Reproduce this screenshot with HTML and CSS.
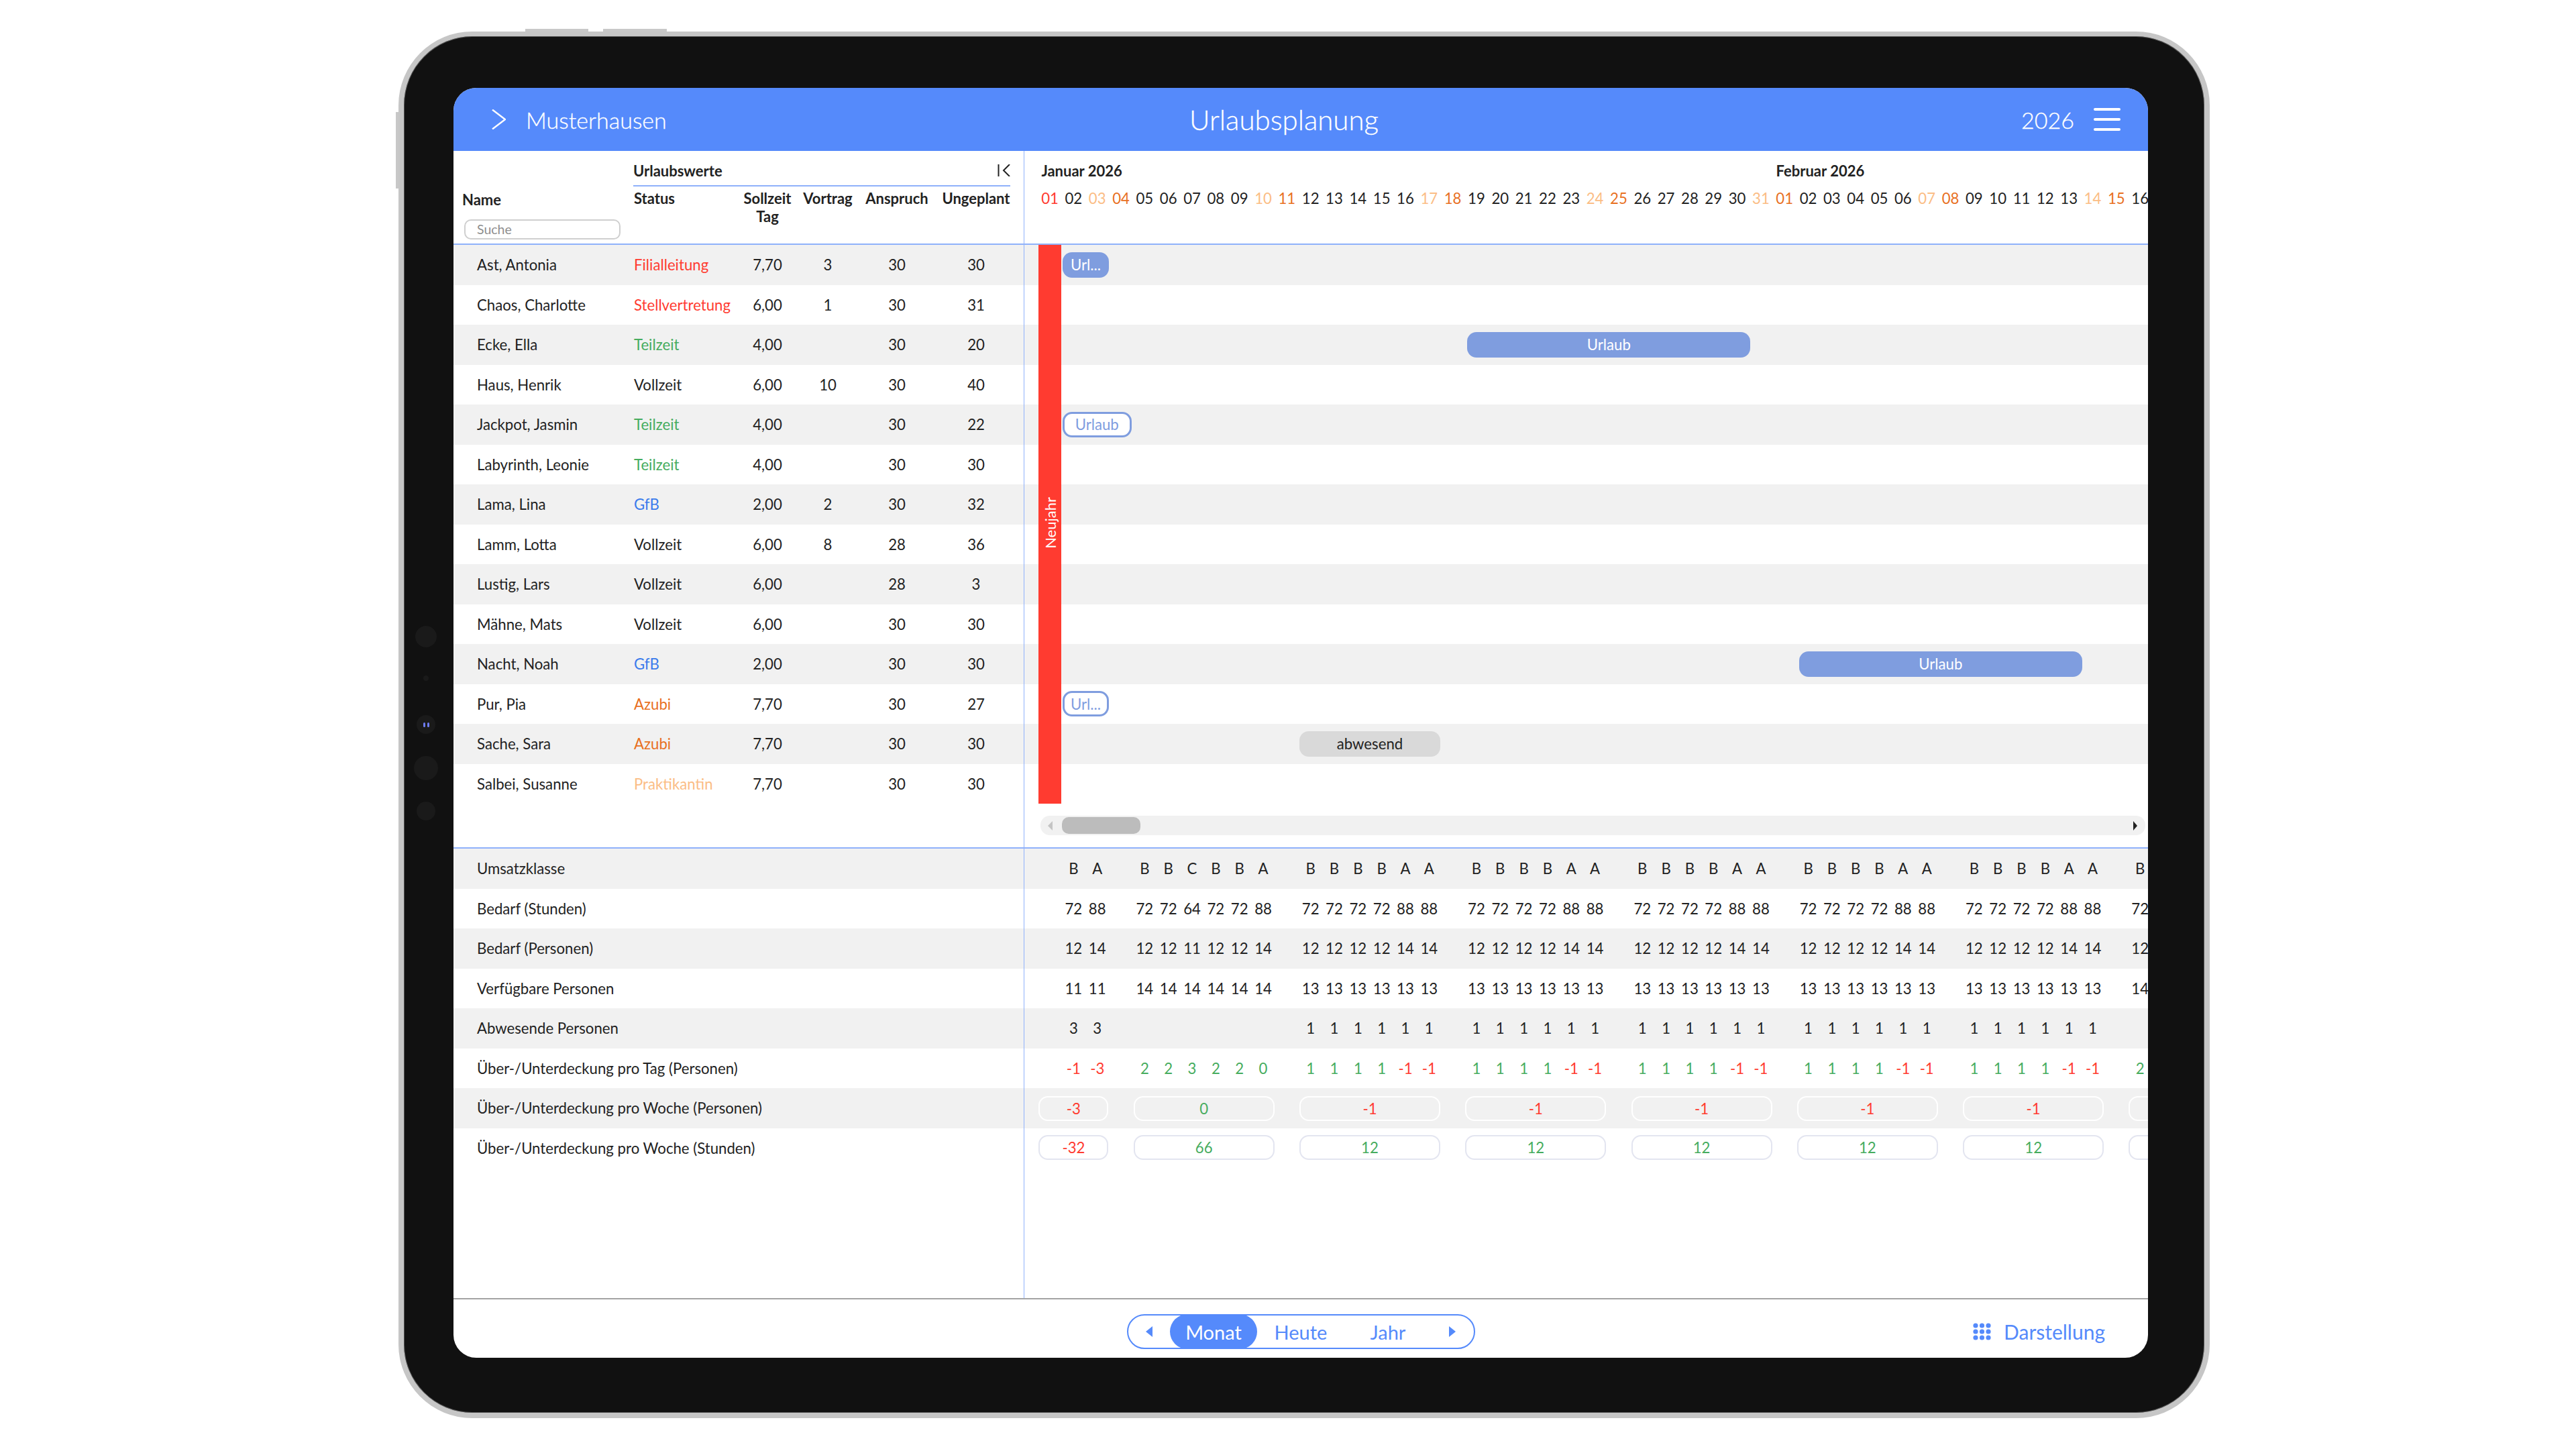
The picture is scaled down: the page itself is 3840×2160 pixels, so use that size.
FILE: index.html
```html
<!DOCTYPE html>
<html lang="de">
<head>
<meta charset="utf-8">
<title>Urlaubsplanung</title>
<link rel="stylesheet" href="styles.css">
</head>
<body>
<div class="device">
  <span class="hw top-a"></span><span class="hw top-b"></span><span class="hw side"></span>
  <span class="lens l1"></span><span class="lens l2"></span><span class="lens l3"><b></b><b></b></span><span class="lens l4"></span><span class="lens l5"></span>
  <div class="screen">
    <header class="app-header">
      <div class="hd-left">
        <svg class="chev" width="21" height="30" viewBox="0 0 21 30"><polyline points="1,0.5 20,15 1,29.5" fill="none" stroke="#fff" stroke-width="2.4"/></svg>
        <span>Musterhausen</span>
      </div>
      <div class="title">Urlaubsplanung</div>
      <div class="hd-right">
        <span>2026</span>
        <svg width="40" height="34" viewBox="0 0 40 34"><g fill="#fff"><rect width="40" height="4" rx="2"/><rect y="15" width="40" height="4" rx="2"/><rect y="30" width="40" height="4" rx="2"/></g></svg>
      </div>
    </header>
    <main class="main">
      <section class="upper">
        <div class="pane-l">
          <div class="head">
            <div class="head-name">
              <div class="nm">Name</div>
              <div class="search">Suche</div>
            </div>
            <div class="head-values">
              <div class="group"><span>Urlaubswerte</span>
                <svg width="19" height="18" viewBox="0 0 19 18"><path d="M1.5 0V18M18 0L9 9L18 18" fill="none" stroke="#222" stroke-width="2"/></svg>
              </div>
              <div class="cols">
                <span class="st">Status</span><span>Sollzeit<br>Tag</span><span>Vortrag</span><span>Anspruch</span><span class="ung">Ungeplant</span>
              </div>
            </div>
          </div>
          <div class="rows">
            <div class="row"><span class="n">Ast, Antonia</span><span class="st red">Filialleitung</span><span>7,70</span><span>3</span><span>30</span><span>30</span></div>
            <div class="row"><span class="n">Chaos, Charlotte</span><span class="st red">Stellvertretung</span><span>6,00</span><span>1</span><span>30</span><span>31</span></div>
            <div class="row"><span class="n">Ecke, Ella</span><span class="st green">Teilzeit</span><span>4,00</span><span></span><span>30</span><span>20</span></div>
            <div class="row"><span class="n">Haus, Henrik</span><span class="st">Vollzeit</span><span>6,00</span><span>10</span><span>30</span><span>40</span></div>
            <div class="row"><span class="n">Jackpot, Jasmin</span><span class="st green">Teilzeit</span><span>4,00</span><span></span><span>30</span><span>22</span></div>
            <div class="row"><span class="n">Labyrinth, Leonie</span><span class="st green">Teilzeit</span><span>4,00</span><span></span><span>30</span><span>30</span></div>
            <div class="row"><span class="n">Lama, Lina</span><span class="st blue">GfB</span><span>2,00</span><span>2</span><span>30</span><span>32</span></div>
            <div class="row"><span class="n">Lamm, Lotta</span><span class="st">Vollzeit</span><span>6,00</span><span>8</span><span>28</span><span>36</span></div>
            <div class="row"><span class="n">Lustig, Lars</span><span class="st">Vollzeit</span><span>6,00</span><span></span><span>28</span><span>3</span></div>
            <div class="row"><span class="n">Mähne, Mats</span><span class="st">Vollzeit</span><span>6,00</span><span></span><span>30</span><span>30</span></div>
            <div class="row"><span class="n">Nacht, Noah</span><span class="st blue">GfB</span><span>2,00</span><span></span><span>30</span><span>30</span></div>
            <div class="row"><span class="n">Pur, Pia</span><span class="st orange">Azubi</span><span>7,70</span><span></span><span>30</span><span>27</span></div>
            <div class="row"><span class="n">Sache, Sara</span><span class="st orange">Azubi</span><span>7,70</span><span></span><span>30</span><span>30</span></div>
            <div class="row"><span class="n">Salbei, Susanne</span><span class="st light">Praktikantin</span><span>7,70</span><span></span><span>30</span><span>30</span></div>
          </div>
        </div>
        <div class="pane-r">
          <div class="head chart-head">
            <div class="months"><span class="m-jan">Januar 2026</span><span class="m-feb">Februar 2026</span></div>
            <div class="days">
              <span class="red">01</span><span>02</span><span class="light">03</span><span class="orange">04</span><span>05</span><span>06</span><span>07</span><span>08</span><span>09</span><span class="light">10</span><span class="orange">11</span><span>12</span><span>13</span><span>14</span><span>15</span><span>16</span><span class="light">17</span><span class="orange">18</span><span>19</span><span>20</span><span>21</span><span>22</span><span>23</span><span class="light">24</span><span class="orange">25</span><span>26</span><span>27</span><span>28</span><span>29</span><span>30</span><span class="light">31</span><span class="orange">01</span><span>02</span><span>03</span><span>04</span><span>05</span><span>06</span><span class="light">07</span><span class="orange">08</span><span>09</span><span>10</span><span>11</span><span>12</span><span>13</span><span class="light">14</span><span class="orange">15</span><span>16</span>
            </div>
          </div>
          <div class="chart-body">
            <div class="holiday"><span>Neujahr</span></div>
            <div class="crow"><span class="bar solid b-short">Url...</span></div>
            <div class="crow"></div>
            <div class="crow"><span class="bar solid b-ecke">Urlaub</span></div>
            <div class="crow"></div>
            <div class="crow"><span class="bar outline b-jack">Urlaub</span></div>
            <div class="crow"></div>
            <div class="crow"></div>
            <div class="crow"></div>
            <div class="crow"></div>
            <div class="crow"></div>
            <div class="crow"><span class="bar solid b-nacht">Urlaub</span></div>
            <div class="crow"><span class="bar outline b-short">Url...</span></div>
            <div class="crow"><span class="bar gray b-abw">abwesend</span></div>
            <div class="crow"></div>
          </div>
          <div class="scroll">
            <span class="arr"><svg width="7" height="14" viewBox="0 0 7 14"><path d="M7 0V14L0 7Z" fill="#c4c4c4"/></svg></span>
            <span class="thumb"></span>
            <span class="arr end"><svg width="6" height="14" viewBox="0 0 6 14"><path d="M0 0V14L6 7Z" fill="#222"/></svg></span>
          </div>
        </div>
      </section>
      <section class="lower">
        <div class="pane-l">
          <div class="lrow">Umsatzklasse</div>
          <div class="lrow">Bedarf (Stunden)</div>
          <div class="lrow">Bedarf (Personen)</div>
          <div class="lrow">Verfügbare Personen</div>
          <div class="lrow">Abwesende Personen</div>
          <div class="lrow">Über-/Unterdeckung pro Tag (Personen)</div>
          <div class="lrow">Über-/Unterdeckung pro Woche (Personen)</div>
          <div class="lrow">Über-/Unterdeckung pro Woche (Stunden)</div>
        </div>
        <div class="pane-r">
          <div class="vrow"><i></i><span>B</span><span>A</span><i></i><span>B</span><span>B</span><span>C</span><span>B</span><span>B</span><span>A</span><i></i><span>B</span><span>B</span><span>B</span><span>B</span><span>A</span><span>A</span><i></i><span>B</span><span>B</span><span>B</span><span>B</span><span>A</span><span>A</span><i></i><span>B</span><span>B</span><span>B</span><span>B</span><span>A</span><span>A</span><i></i><span>B</span><span>B</span><span>B</span><span>B</span><span>A</span><span>A</span><i></i><span>B</span><span>B</span><span>B</span><span>B</span><span>A</span><span>A</span><i></i><span>B</span></div>
          <div class="vrow"><i></i><span>72</span><span>88</span><i></i><span>72</span><span>72</span><span>64</span><span>72</span><span>72</span><span>88</span><i></i><span>72</span><span>72</span><span>72</span><span>72</span><span>88</span><span>88</span><i></i><span>72</span><span>72</span><span>72</span><span>72</span><span>88</span><span>88</span><i></i><span>72</span><span>72</span><span>72</span><span>72</span><span>88</span><span>88</span><i></i><span>72</span><span>72</span><span>72</span><span>72</span><span>88</span><span>88</span><i></i><span>72</span><span>72</span><span>72</span><span>72</span><span>88</span><span>88</span><i></i><span>72</span></div>
          <div class="vrow"><i></i><span>12</span><span>14</span><i></i><span>12</span><span>12</span><span>11</span><span>12</span><span>12</span><span>14</span><i></i><span>12</span><span>12</span><span>12</span><span>12</span><span>14</span><span>14</span><i></i><span>12</span><span>12</span><span>12</span><span>12</span><span>14</span><span>14</span><i></i><span>12</span><span>12</span><span>12</span><span>12</span><span>14</span><span>14</span><i></i><span>12</span><span>12</span><span>12</span><span>12</span><span>14</span><span>14</span><i></i><span>12</span><span>12</span><span>12</span><span>12</span><span>14</span><span>14</span><i></i><span>12</span></div>
          <div class="vrow"><i></i><span>11</span><span>11</span><i></i><span>14</span><span>14</span><span>14</span><span>14</span><span>14</span><span>14</span><i></i><span>13</span><span>13</span><span>13</span><span>13</span><span>13</span><span>13</span><i></i><span>13</span><span>13</span><span>13</span><span>13</span><span>13</span><span>13</span><i></i><span>13</span><span>13</span><span>13</span><span>13</span><span>13</span><span>13</span><i></i><span>13</span><span>13</span><span>13</span><span>13</span><span>13</span><span>13</span><i></i><span>13</span><span>13</span><span>13</span><span>13</span><span>13</span><span>13</span><i></i><span>14</span></div>
          <div class="vrow"><i></i><span>3</span><span>3</span><i></i><i></i><i></i><i></i><i></i><i></i><i></i><i></i><span>1</span><span>1</span><span>1</span><span>1</span><span>1</span><span>1</span><i></i><span>1</span><span>1</span><span>1</span><span>1</span><span>1</span><span>1</span><i></i><span>1</span><span>1</span><span>1</span><span>1</span><span>1</span><span>1</span><i></i><span>1</span><span>1</span><span>1</span><span>1</span><span>1</span><span>1</span><i></i><span>1</span><span>1</span><span>1</span><span>1</span><span>1</span><span>1</span></div>
          <div class="vrow"><i></i><span class="red">-1</span><span class="red">-3</span><i></i><span class="green">2</span><span class="green">2</span><span class="green">3</span><span class="green">2</span><span class="green">2</span><span class="green">0</span><i></i><span class="green">1</span><span class="green">1</span><span class="green">1</span><span class="green">1</span><span class="red">-1</span><span class="red">-1</span><i></i><span class="green">1</span><span class="green">1</span><span class="green">1</span><span class="green">1</span><span class="red">-1</span><span class="red">-1</span><i></i><span class="green">1</span><span class="green">1</span><span class="green">1</span><span class="green">1</span><span class="red">-1</span><span class="red">-1</span><i></i><span class="green">1</span><span class="green">1</span><span class="green">1</span><span class="green">1</span><span class="red">-1</span><span class="red">-1</span><i></i><span class="green">1</span><span class="green">1</span><span class="green">1</span><span class="green">1</span><span class="red">-1</span><span class="red">-1</span><i></i><span class="green">2</span></div>
          <div class="vrow boxes first"><span class="box wk3 red">-3</span><i></i><span class="box wk6 green">0</span><i></i><span class="box wk6 red">-1</span><i></i><span class="box wk6 red">-1</span><i></i><span class="box wk6 red">-1</span><i></i><span class="box wk6 red">-1</span><i></i><span class="box wk6 red">-1</span><i></i><span class="box wk6"></span></div>
          <div class="vrow boxes second"><span class="box wk3 red">-32</span><i></i><span class="box wk6 green">66</span><i></i><span class="box wk6 green">12</span><i></i><span class="box wk6 green">12</span><i></i><span class="box wk6 green">12</span><i></i><span class="box wk6 green">12</span><i></i><span class="box wk6 green">12</span><i></i><span class="box wk6"></span></div>
        </div>
      </section>
    </main>
    <footer class="footer">
      <div></div>
      <nav class="seg">
        <span class="seg-arrow"><svg width="10" height="16" viewBox="0 0 10 16"><path d="M10 0V16L0 8Z" fill="#558afb"/></svg></span>
        <span class="seg-item on">Monat</span><span class="seg-item">Heute</span><span class="seg-item">Jahr</span>
        <span class="seg-arrow"><svg width="10" height="16" viewBox="0 0 10 16"><path d="M0 0V16L10 8Z" fill="#558afb"/></svg></span>
      </nav>
      <div class="view">
        <svg width="27" height="26" viewBox="0 0 27 26"><g fill="#558afb"><circle cx="4" cy="4" r="3.6"/><circle cx="13.5" cy="4" r="3.6"/><circle cx="23" cy="4" r="3.6"/><circle cx="4" cy="13" r="3.6"/><circle cx="13.5" cy="13" r="3.6"/><circle cx="23" cy="13" r="3.6"/><circle cx="4" cy="22" r="3.6"/><circle cx="13.5" cy="22" r="3.6"/><circle cx="23" cy="22" r="3.6"/></g></svg>
        <span>Darstellung</span>
      </div>
    </footer>
  </div>
</div>
</body>
</html>
```

FILE: styles.css
```css
* { box-sizing: border-box; }
html, body { margin: 0; padding: 0; }
body {
  width: 3840px; height: 2160px; overflow: hidden; background: #fff;
  font-family: "Lato", "Liberation Sans", sans-serif; color: #222; font-size: 22.2px;
}
.device {
  position: relative; width: 2700px; height: 2067px; margin: 47px 0 0 594px;
  padding: 77px 0 0 74px; background: #111; border: 8px solid #c6c6c6; border-top-width: 7px;
  border-radius: 110px; box-shadow: inset 0 0 0 1px #555;
}
.hw { position: absolute; background: #c8c8c8; }
.top-a { left: 181px; top: -11px; width: 94px; height: 4px; }
.top-b { left: 297px; top: -11px; width: 95px; height: 4px; }
.side { left: -12px; top: 113px; width: 4px; height: 114px; }
.lens { position: absolute; border-radius: 50%; background: #1a1a1a; display: flex; align-items: center; justify-content: center; gap: 3px; }
.l1 { left: 17px; top: 879px; width: 32px; height: 32px; }
.l2 { left: 29px; top: 953px; width: 8px; height: 8px; }
.l3 { left: 19px; top: 1012px; width: 28px; height: 28px; }
.l3 b { width: 3px; height: 7px; background: #6d7bf0; border-radius: 2px; }
.l4 { left: 15px; top: 1073px; width: 36px; height: 36px; }
.l5 { left: 19px; top: 1141px; width: 28px; height: 28px; }

.screen {
  width: 2526px; height: 1893px; background: #fff; border-radius: 34px; overflow: hidden;
  display: flex; flex-direction: column;
}
.app-header {
  height: 94px; flex: none; background: #558afb; color: #fff; font-size: 34px; font-weight: 300; -webkit-text-stroke: 0.3px #fff;
  display: grid; grid-template-columns: 1fr auto 1fr; align-items: center; padding: 0 41px 0 57px;
}
.hd-left { display: flex; align-items: center; gap: 30px; }
.hd-right { display: flex; align-items: center; justify-content: flex-end; gap: 29px; }
.title { margin-right: 66px; font-size: 42px; }

.main { height: 1712px; flex: none; display: flex; flex-direction: column; border-bottom: 2px solid #a3a3a3; }
.upper { height: 1040px; flex: none; display: grid; grid-template-columns: 851px 1fr; border-bottom: 2px solid #8fb1fb; }
.lower { flex: 1; display: grid; grid-template-columns: 851px 1fr; min-height: 0; }
.pane-l { border-right: 1px solid #8fb1fb; }
.pane-r { overflow: hidden; min-width: 0; }

.head { height: 140px; display: flex; border-bottom: 2px solid #8fb1fb; }
.head-name { width: 268px; flex: none; padding: 59px 0 0 13px; }
.nm { font-weight: 700; line-height: 27px; font-size: 22px; }
.search {
  margin: 16px 0 0 3px; width: 233px; height: 30px; border: 2px solid #cfcfcf; border-radius: 10px;
  color: #8e8e8e; font-size: 19.5px; line-height: 26px; padding-left: 17px;
}
.head-values { flex: 1; display: flex; flex-direction: column; font-weight: 700; font-size: 22px; line-height: 27px; }
.group {
  height: 53px; margin-right: 20px; flex: none; border-bottom: 2px solid #8fb1fb;
  display: flex; justify-content: space-between; align-items: flex-start; padding-top: 16px;
}
.group svg { margin-top: 4px; }
.cols { display: grid; grid-template-columns: 160px 80px 100px 106px 130px; padding-top: 4px; text-align: center; }
.cols .st { text-align: left; padding-left: 1px; }

.row, .crow, .lrow, .vrow { height: 59.5px; }
.rows > :nth-child(odd), .lower .pane-l > :nth-child(odd), .lower .pane-r > :nth-child(odd) { background: #f1f1f1; }
.row {
  display: grid; grid-template-columns: 268px 160px 80px 100px 106px 130px; align-items: center; text-align: center;
}
.row .n { text-align: left; padding-left: 35px; }
.row .st { text-align: left; padding-left: 1px; }
.red { color: #ff3b30; }
.green { color: #46ac5e; }
.blue { color: #3a7bec; }
.orange { color: #e8701f; }
.light { color: #fbbd85; }

.chart-head { display: block; padding-left: 20.4px; overflow: hidden; }
.months { padding-top: 16px; font-weight: 700; font-size: 22px; line-height: 27px; display: grid; grid-template-columns: repeat(53, 35.33px); white-space: nowrap; }
.m-jan { grid-column: 1; padding-left: 5px; }
.m-feb { grid-column: 32; padding-left: 5px; }
.days { margin-top: 14px; display: grid; grid-template-columns: repeat(53, 35.33px); text-align: center; line-height: 27px; }

.chart-body { position: relative; }
.chart-body > :nth-child(even) { background: #f1f1f1; }
.chart-body > .holiday {
  position: absolute; left: 21.4px; top: 0; bottom: 0; width: 33.6px; z-index: 1; background: #ff3b30;
  display: flex; align-items: center; justify-content: center; color: #fff;
}
.holiday span { writing-mode: vertical-rl; transform: rotate(180deg); font-size: 22px; margin-bottom: 5px; }
.crow { display: grid; grid-template-columns: repeat(53, 35.33px); padding-left: 20.4px; align-items: center; }
.bar {
  height: 38px; border-radius: 14px; display: flex; align-items: center; justify-content: center; overflow: hidden; white-space: nowrap;
}
.solid { background: #7f9ddf; color: #fff; }
.outline { background: #fff; color: #7f9ddf; border: 3px solid #7f9ddf; }
.gray { background: #d9d9d9; color: #222; }
.b-short { grid-column: 2 / span 2; margin-left: 1px; }
.b-jack { grid-column: 2 / span 3; margin: 0 2px 0 1px; }
.b-ecke { grid-column: 19 / span 12; margin: 0 -2px 0 4px; }
.b-nacht { grid-column: 33 / span 12; margin: 0 -2px 0 4px; }
.b-abw { grid-column: 12 / span 6; margin: 0 1px; }

.scroll {
  margin: 18px 0 0 24px; width: 1647px; height: 29px; background: #f1f1f1; border-radius: 14px;
  display: flex; align-items: center;
}
.arr { width: 32px; display: flex; padding-left: 11px; }
.arr.end { margin-left: auto; padding-left: 0; justify-content: flex-end; padding-right: 12px; }
.thumb { width: 117px; height: 25px; background: #bcbcbc; border-radius: 10px; }

.lrow { display: flex; align-items: center; padding-left: 35px; }
.vrow {
  display: grid; grid-template-columns: repeat(53, 35.33px); padding-left: 20.4px;
  align-items: center; text-align: center;
}
.vrow span { display: block; }
.box {
  height: 37px; line-height: 33px; border-radius: 14px; border: 2px solid #e3e5f0; align-self: start; margin: 0 1px; text-align: center;
}
.first .box { border-color: #fff; margin-top: 12px; }
.second .box { margin-top: 10.5px; }
.wk3 { grid-column: span 3; }
.wk6 { grid-column: span 6; }

.footer { flex: 1; display: grid; grid-template-columns: 1fr auto 1fr; padding: 22px 64px 0; align-items: start; }
.seg {
  width: 519px; height: 52px; border: 2px solid #558afb; border-radius: 26px; display: flex; align-items: center;
  color: #558afb; font-size: 29px;
}
.seg-arrow { flex: 1; display: flex; justify-content: center; }
.seg-item { width: 130px; height: 52px; margin: -2px 0; display: flex; align-items: center; justify-content: center; border-radius: 26px; }
.seg-item.on { background: #558afb; color: #fff; }
.view { display: flex; justify-content: flex-end; align-items: center; gap: 19px; color: #558afb; font-size: 30px; height: 52px; }
```
